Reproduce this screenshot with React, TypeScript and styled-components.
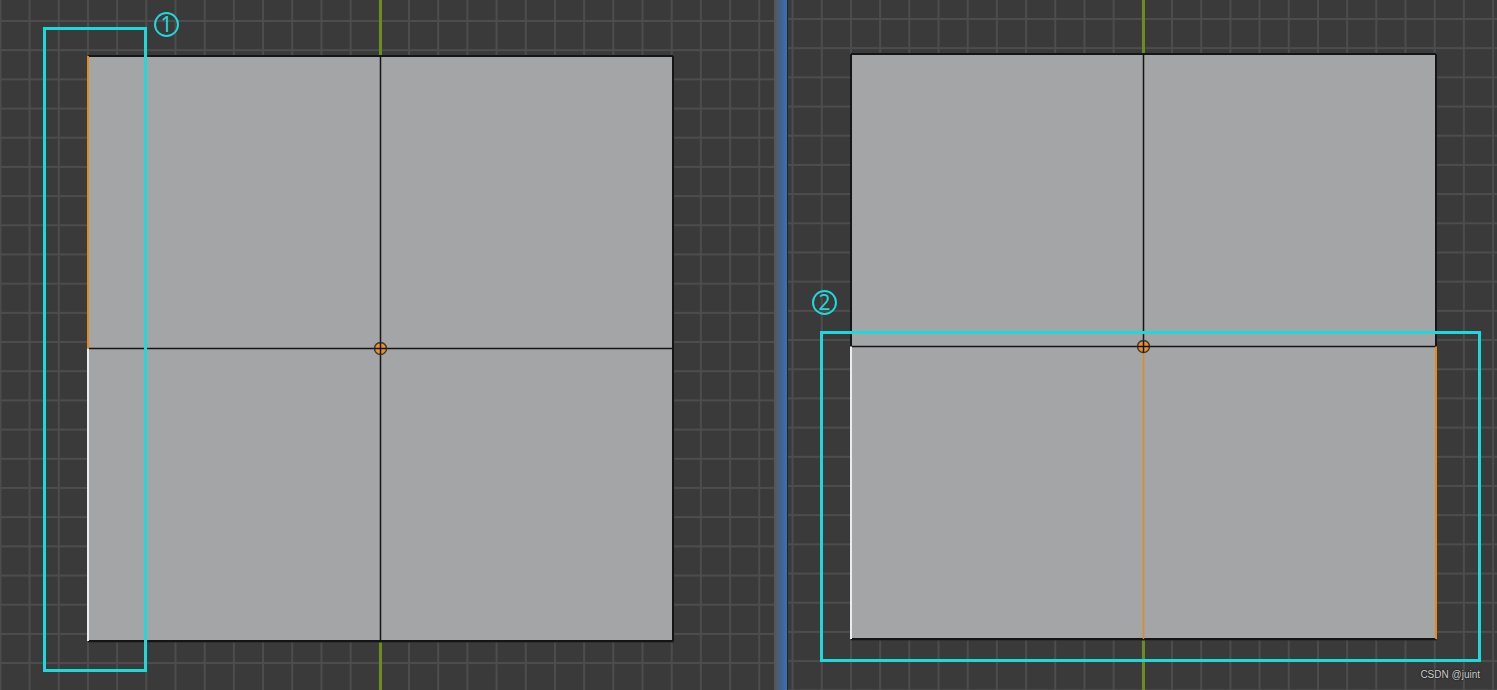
import styled, { createGlobalStyle } from "styled-components";

const GlobalStyle = createGlobalStyle`
  html, body {
    margin: 0;
    padding: 0;
    background: #393939;
    overflow: hidden;
  }
  body {
    font-family: "Noto Sans", "Liberation Sans", sans-serif;
  }
`;

const GRID = 29.2;

const Page = styled.div`
  position: relative;
  display: flex;
  width: 1497px;
  height: 690px;
  overflow: hidden;
`;

// a 3d viewport with its floor grid; offsets keep the grid aligned to the origin
const Viewport = styled.div<{ $width?: number; $gx: number; $gy: number }>`
  position: relative;
  flex: ${(p) => (p.$width ? `0 0 ${p.$width}px` : "1 1 auto")};
  height: 100%;
  background-color: #3a3a3a;
  background-image: linear-gradient(
      to right,
      #4d4d4d 0,
      #4d4d4d 2px,
      transparent 2px
    ),
    linear-gradient(to bottom, #4d4d4d 0, #4d4d4d 2px, transparent 2px);
  background-size: ${GRID}px ${GRID}px;
  background-position: ${(p) => `${p.$gx}px ${p.$gy}px`};
  overflow: hidden;
`;

const Divider = styled.div`
  flex: 0 0 14px;
  height: 100%;
  display: flex;
`;

const DividerEdge = styled.div<{ $color: string; $w: number }>`
  flex: 0 0 ${(p) => p.$w}px;
  background: ${(p) => p.$color};
`;

const DividerGlow = styled.div`
  flex: 1 1 auto;
  background: linear-gradient(to right, #4f5a66 0%, #3f6594 55%, #3a72b8 100%);
`;

const Scene = styled.svg`
  position: absolute;
  inset: 0;
  width: 100%;
  height: 100%;
`;

const Callout = styled.div<{ $x: number; $y: number; $w: number; $h: number }>`
  position: absolute;
  left: ${(p) => p.$x}px;
  top: ${(p) => p.$y}px;
  width: ${(p) => p.$w}px;
  height: ${(p) => p.$h}px;
  box-sizing: border-box;
  border: 3px solid #1fd8da;
  pointer-events: none;
`;

// circled step number
const Marker = styled.span<{ $x: number; $y: number }>`
  position: absolute;
  left: ${(p) => p.$x}px;
  top: ${(p) => p.$y}px;
  width: 25px;
  height: 25px;
  box-sizing: border-box;
  border: 2px solid #1fd8da;
  border-radius: 50%;
  display: flex;
  align-items: center;
  justify-content: center;
  font-family: "Noto Sans", "DejaVu Sans", sans-serif;
  font-size: 21px;
  line-height: 1;
  color: #1fd8da;
`;

const Watermark = styled.span`
  position: absolute;
  right: 17px;
  bottom: 10px;
  font-family: "Liberation Sans", Arial, sans-serif;
  font-size: 10px;
  color: #cfcfcf;
  text-shadow: 0 0 2px #111, 0 0 1px #111;
`;

const EDGE = "#151515";
const SELECT = "#e8891c";
const ACTIVE = "#ececec";

type Edge = { x1: number; y1: number; x2: number; y2: number; c: string; w?: number };

type MeshProps = {
  x: number;
  y: number;
  size: number;
  edges: (cx: number, cy: number, l: number, t: number, r: number, b: number) => Edge[];
};

const Mesh = ({ x, y, size, edges }: MeshProps) => {
  const l = x;
  const t = y;
  const r = x + size;
  const b = y + size;
  const cx = x + size / 2;
  const cy = y + size / 2;
  return (
    <Scene>
      <line x1={cx} y1={0} x2={cx} y2={690} stroke="#6a8d22" strokeWidth={3} />
      <rect x={l} y={t + 2} width={size + 1} height={size} fill="#2a2a2a" opacity={0.6} />
      <rect x={l} y={t} width={size} height={size} fill="#a4a5a6" />
      {edges(cx, cy, l, t, r, b).map((e, i) => (
        <line
          key={i}
          x1={e.x1}
          y1={e.y1}
          x2={e.x2}
          y2={e.y2}
          stroke={e.c}
          strokeWidth={e.w ?? 2}
        />
      ))}
      <circle cx={cx} cy={cy} r={6} fill="#f0921f" stroke="#3a3a3a" strokeWidth={1.5} />
      <line x1={cx - 6} y1={cy} x2={cx + 6} y2={cy} stroke={EDGE} strokeWidth={1.5} />
      <line x1={cx} y1={cy - 6} x2={cx} y2={cy + 6} stroke={EDGE} strokeWidth={1.5} />
    </Scene>
  );
};

const leftEdges: MeshProps["edges"] = (cx, cy, l, t, r, b) => [
  { x1: l, y1: t, x2: r, y2: t, c: EDGE },
  { x1: r, y1: t, x2: r, y2: b, c: EDGE },
  { x1: l, y1: b, x2: r, y2: b, c: EDGE },
  { x1: cx, y1: t, x2: cx, y2: b, c: EDGE, w: 1.5 },
  { x1: l, y1: cy, x2: r, y2: cy, c: EDGE, w: 1.5 },
  { x1: l, y1: t, x2: l, y2: cy, c: SELECT },
  { x1: l, y1: cy, x2: l, y2: b, c: ACTIVE },
];

const rightEdges: MeshProps["edges"] = (cx, cy, l, t, r, b) => [
  { x1: l, y1: t, x2: r, y2: t, c: EDGE },
  { x1: l, y1: t, x2: l, y2: cy, c: EDGE },
  { x1: r, y1: t, x2: r, y2: cy, c: EDGE },
  { x1: l, y1: b, x2: r, y2: b, c: EDGE },
  { x1: l, y1: cy, x2: r, y2: cy, c: EDGE, w: 1.5 },
  { x1: cx, y1: t, x2: cx, y2: cy, c: EDGE, w: 1.5 },
  { x1: cx, y1: cy, x2: cx, y2: b, c: SELECT, w: 1.5 },
  { x1: r, y1: cy, x2: r, y2: b, c: SELECT },
  { x1: l, y1: cy, x2: l, y2: b, c: ACTIVE },
];

export default function App() {
  return (
    <>
      <GlobalStyle />
      <Page>
        <Viewport $width={774} $gx={(380 - 1) % GRID} $gy={20}>
          <Mesh x={88} y={56} size={585} edges={leftEdges} />
        </Viewport>
        <Divider>
          <DividerEdge $color="#565656" $w={2} />
          <DividerGlow />
          <DividerEdge $color="#262626" $w={1} />
        </Divider>
        <Viewport $gx={(355 - 1) % GRID} $gy={18}>
          <Mesh x={63} y={54} size={585} edges={rightEdges} />
        </Viewport>

        <Callout $x={43} $y={27} $w={104} $h={645} />
        <Marker $x={154} $y={12}>1</Marker>
        <Callout $x={820} $y={331} $w={661} $h={331} />
        <Marker $x={812} $y={290}>2</Marker>
        <Watermark>CSDN @juint</Watermark>
      </Page>
    </>
  );
}
